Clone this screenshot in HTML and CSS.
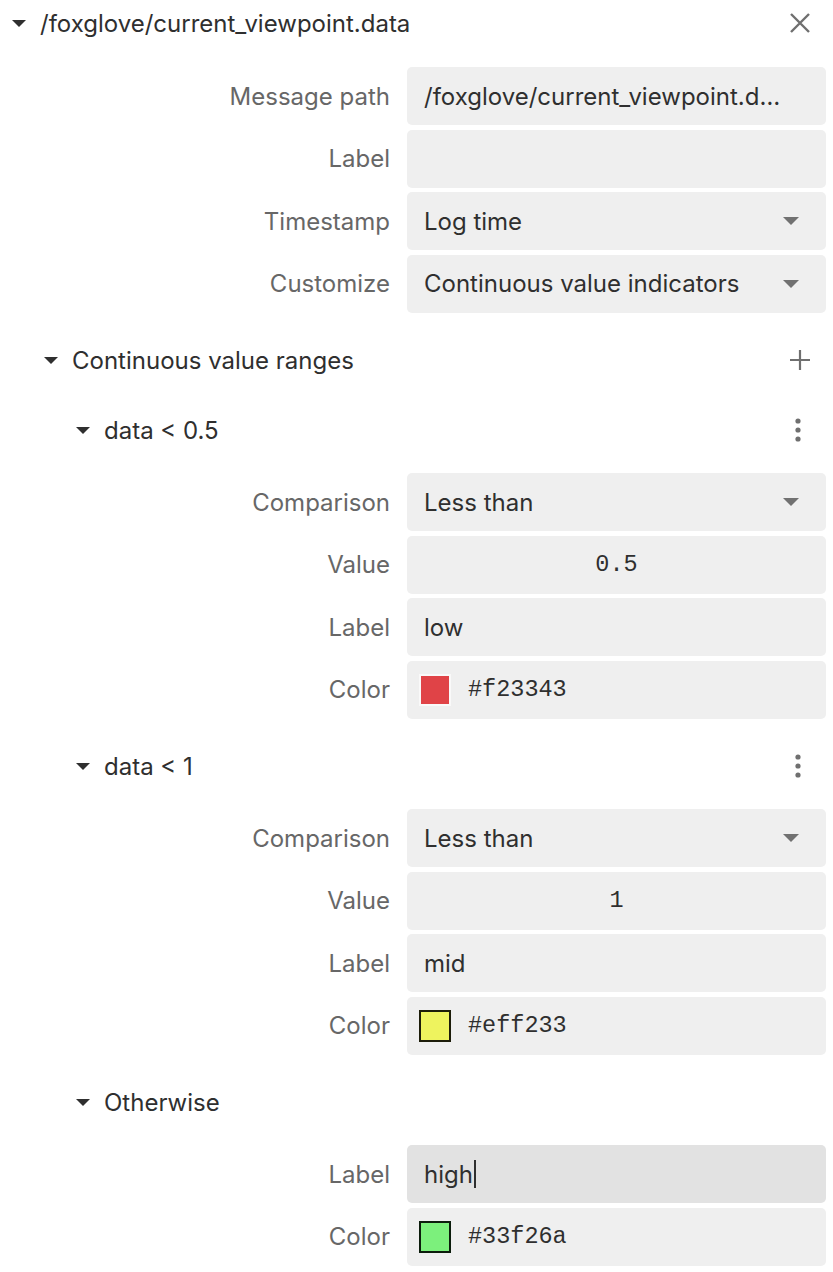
FILE: index.html
```html
<!DOCTYPE html>
<html lang="en">
<head>
<meta charset="utf-8">
<title>Settings</title>
<link rel="stylesheet" href="styles.css">
</head>
<body>
<div class="panel">
  <div class="node-header lvl0">
    <span class="caret"></span>
    <span class="node-title">/foxglove/current_viewpoint.data</span>
    <span class="icon-btn close">
      <svg width="22" height="22" viewBox="0 0 22 22"><path d="M2 2L20 20M20 2L2 20" stroke="#6f6f6f" stroke-width="2.4" fill="none"/></svg>
    </span>
  </div>
  <div class="fields top">
    <div class="field-label">Message path</div>
    <div class="input"><span class="ellip">/foxglove/current_viewpoint.data</span></div>
    <div class="field-label">Label</div>
    <div class="input"></div>
    <div class="field-label">Timestamp</div>
    <div class="input select"><span>Log time</span><span class="drop"></span></div>
    <div class="field-label">Customize</div>
    <div class="input select"><span>Continuous value indicators</span><span class="drop"></span></div>
  </div>

  <div class="node-header lvl1">
    <span class="caret"></span>
    <span class="node-title">Continuous value ranges</span>
    <span class="icon-btn plus">
      <svg width="22" height="22" viewBox="0 0 22 22"><path d="M11 1V21M1 11H21" stroke="#6f6f6f" stroke-width="2.2" fill="none"/></svg>
    </span>
  </div>
  <div class="section-body">
    <div class="node-header lvl2">
      <span class="caret"></span>
      <span class="node-title">data &lt; 0.5</span>
      <span class="icon-btn kebab">
        <svg width="6" height="24" viewBox="0 0 6 24"><circle cx="3" cy="3" r="2.6" fill="#6f6f6f"/><circle cx="3" cy="12" r="2.6" fill="#6f6f6f"/><circle cx="3" cy="21" r="2.6" fill="#6f6f6f"/></svg>
      </span>
    </div>
    <div class="fields">
      <div class="field-label">Comparison</div>
      <div class="input select"><span>Less than</span><span class="drop"></span></div>
      <div class="field-label">Value</div>
      <div class="input number"><span>0.5</span></div>
      <div class="field-label">Label</div>
      <div class="input"><span>low</span></div>
      <div class="field-label">Color</div>
      <div class="input color"><span class="swatch sw-red"></span><span class="hex">#f23343</span></div>
    </div>

    <div class="node-header lvl2">
      <span class="caret"></span>
      <span class="node-title">data &lt; 1</span>
      <span class="icon-btn kebab">
        <svg width="6" height="24" viewBox="0 0 6 24"><circle cx="3" cy="3" r="2.6" fill="#6f6f6f"/><circle cx="3" cy="12" r="2.6" fill="#6f6f6f"/><circle cx="3" cy="21" r="2.6" fill="#6f6f6f"/></svg>
      </span>
    </div>
    <div class="fields">
      <div class="field-label">Comparison</div>
      <div class="input select"><span>Less than</span><span class="drop"></span></div>
      <div class="field-label">Value</div>
      <div class="input number"><span>1</span></div>
      <div class="field-label">Label</div>
      <div class="input"><span>mid</span></div>
      <div class="field-label">Color</div>
      <div class="input color"><span class="swatch sw-yellow"></span><span class="hex">#eff233</span></div>
    </div>

    <div class="node-header lvl2">
      <span class="caret"></span>
      <span class="node-title">Otherwise</span>
    </div>
    <div class="fields">
      <div class="field-label">Label</div>
      <div class="input focused"><span>high</span><span class="text-caret"></span></div>
      <div class="field-label">Color</div>
      <div class="input color"><span class="swatch sw-green"></span><span class="hex">#33f26a</span></div>
    </div>
  </div>
</div>
</body>
</html>
```

FILE: styles.css
```css
html, body {
  margin: 0;
  padding: 0;
  background: #ffffff;
}

body {
  font-family: Inter, "Noto Sans", "Liberation Sans", sans-serif;
  font-size: 24px;
  color: #2f2f2f;
  width: 833px;
  overflow: hidden;
}

.panel {
  display: flex;
  flex-direction: column;
}

.node-header {
  height: 46px;
  display: flex;
  align-items: center;
  padding-right: 22px;
}

.node-header.lvl0 { padding-left: 12px; }
.node-header.lvl1 { padding-left: 44px; }
.node-header.lvl2 { padding-left: 76px; }

.caret {
  width: 0;
  height: 0;
  border-left: 7px solid transparent;
  border-right: 7px solid transparent;
  border-top: 7px solid #2f2f2f;
  margin-right: 14px;
  flex: none;
}

.node-title {
  flex: 1;
  white-space: nowrap;
  color: #2f2f2f;
}

.icon-btn {
  display: flex;
  align-items: center;
  justify-content: center;
  flex: none;
}

.icon-btn.kebab {
  margin-right: 10px;
}

.fields {
  display: grid;
  grid-template-columns: 1fr 419px;
  grid-auto-rows: 58px;
  column-gap: 17px;
  row-gap: 4.5px;
  padding: 20px 7px 24.5px 0;
}

.fields.top {
  padding-top: 21px;
}

.section-body {
  padding-top: 24px;
}

.field-label {
  align-self: center;
  text-align: right;
  color: #676767;
  white-space: nowrap;
}

.input {
  background: #efefef;
  border-radius: 5px;
  display: flex;
  align-items: center;
  padding: 0 17px;
  min-width: 0;
  color: #2f2f2f;
}

.input .ellip {
  overflow: hidden;
  white-space: nowrap;
  text-overflow: ellipsis;
  padding-right: 24px;
}

.input.select {
  justify-content: space-between;
  padding-right: 27px;
}

.drop {
  width: 0;
  height: 0;
  border-left: 8px solid transparent;
  border-right: 8px solid transparent;
  border-top: 8px solid #717171;
  flex: none;
}

.input.number {
  justify-content: center;
  font-family: "Liberation Mono", "DejaVu Sans Mono", monospace;
  font-size: 23.5px;
}

.input.color {
  padding-left: 12px;
}

.swatch {
  width: 28px;
  height: 28px;
  border: 2px solid #1a1a1a;
  flex: none;
  margin-right: 17px;
}

.sw-red { background: #e04347; border-color: #f9f9f9; }
.sw-yellow { background: #eef35e; border-color: #1c1c0a; }
.sw-green { background: #7cf07c; border-color: #0c1c0c; }

.hex {
  font-family: "Liberation Mono", "DejaVu Sans Mono", monospace;
  font-size: 23.5px;
  color: #2f2f2f;
}

.input.focused {
  background: #e2e2e2;
}

.text-caret {
  width: 2px;
  height: 28px;
  background: #2f2f2f;
  margin-left: 1px;
}
```
